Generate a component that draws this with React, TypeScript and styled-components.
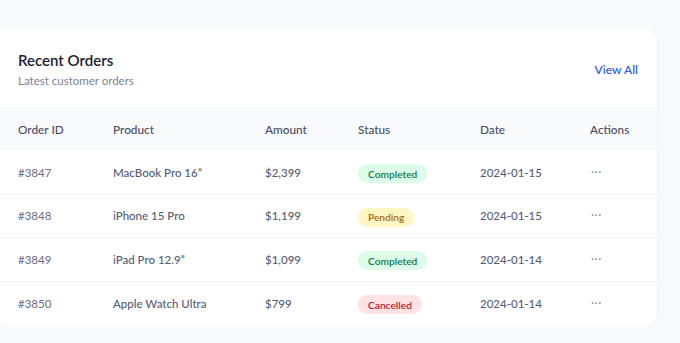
import React from "react";
import styled, { createGlobalStyle } from "styled-components";

const Global = createGlobalStyle`
  html, body { margin: 0; padding: 0; background: #f8f9fb; }
  body { font-family: Lato, "Noto Sans", sans-serif; -webkit-font-smoothing: antialiased; overflow: hidden; }
`;

const Page = styled.div`
  padding-top: 29px;
  padding-right: 23px;
`;

const Card = styled.section`
  margin-left: -6px;
  background: #ffffff;
  border-radius: 12px;
  box-shadow: 0 1px 3px rgba(20, 24, 40, 0.05);
  overflow: hidden;
`;

const Header = styled.div`
  display: flex;
  align-items: center;
  justify-content: space-between;
  height: 78px;
  padding: 0 19px 0 24px;
  box-sizing: border-box;
`;

const TitleBlock = styled.div`
  display: flex;
  flex-direction: column;
  gap: 3px;
  margin-top: 2px;
`;

const Title = styled.h2`
  margin: 0;
  font-size: 15px;
  font-weight: 600;
  color: #1c2033;
  line-height: 20px;
`;

const Subtitle = styled.p`
  margin: 0;
  font-size: 11.5px;
  color: #7d8299;
  line-height: 16px;
`;

const ViewAll = styled.a`
  font-size: 12px;
  font-weight: 600;
  color: #2f63e0;
  text-decoration: none;
  margin-top: 2px;
`;

const Row = styled.div<{ $head?: boolean; $last?: boolean }>`
  display: grid;
  grid-template-columns: 95px 152px 93px 122px 110px 1fr;
  align-items: center;
  padding: 0 24px;
  height: ${(p) => (p.$head ? "44px" : "43.5px")};
  background: ${(p) => (p.$head ? "#f9fafc" : "#ffffff")};
  border-bottom: ${(p) => (p.$head || p.$last ? "none" : "1px solid #f1f2f6")};
  box-sizing: border-box;
`;

const HeadCell = styled.div`
  font-size: 11.8px;
  font-weight: 500;
  color: #474d66;
`;

const Cell = styled.div<{ $tone?: "id" | "main" }>`
  font-size: 11.5px;
  font-weight: ${(p) => (p.$tone === "main" ? 500 : 400)};
  color: ${(p) => (p.$tone === "id" ? "#686d84" : "#565c75")};
`;

const tones = {
  Completed: { bg: "#dcfce7", fg: "#18794a" },
  Pending: { bg: "#fef7c3", fg: "#a66a10" },
  Cancelled: { bg: "#fee2e4", fg: "#b5202f" },
} as const;

type Status = keyof typeof tones;

const Badge = styled.span<{ $status: Status }>`
  display: inline-flex;
  align-items: center;
  height: 19px;
  padding: 0 10px;
  border-radius: 10px;
  font-size: 10.2px;
  font-weight: 600;
  background: ${(p) => tones[p.$status].bg};
  color: ${(p) => tones[p.$status].fg};
`;

const Dots = styled.span`
  font-size: 12px;
  color: #8a8fa3;
  letter-spacing: 0.5px;
  padding-left: 1px;
  position: relative;
  top: -1px;
`;

const orders: { id: string; product: string; amount: string; status: Status; date: string }[] = [
  { id: "#3847", product: "MacBook Pro 16\u201D", amount: "$2,399", status: "Completed", date: "2024-01-15" },
  { id: "#3848", product: "iPhone 15 Pro", amount: "$1,199", status: "Pending", date: "2024-01-15" },
  { id: "#3849", product: "iPad Pro 12.9\u201D", amount: "$1,099", status: "Completed", date: "2024-01-14" },
  { id: "#3850", product: "Apple Watch Ultra", amount: "$799", status: "Cancelled", date: "2024-01-14" },
];

export default function App() {
  return (
    <>
      <Global />
      <Page>
        <Card>
          <Header>
            <TitleBlock>
              <Title>Recent Orders</Title>
              <Subtitle>Latest customer orders</Subtitle>
            </TitleBlock>
            <ViewAll href="#">View All</ViewAll>
          </Header>
          <Row $head>
            <HeadCell>Order ID</HeadCell>
            <HeadCell>Product</HeadCell>
            <HeadCell>Amount</HeadCell>
            <HeadCell>Status</HeadCell>
            <HeadCell>Date</HeadCell>
            <HeadCell>Actions</HeadCell>
          </Row>
          {orders.map((o, i) => (
            <Row key={o.id} $last={i === orders.length - 1}>
              <Cell $tone="id">{o.id}</Cell>
              <Cell $tone="main">{o.product}</Cell>
              <Cell $tone="main">{o.amount}</Cell>
              <div>
                <Badge $status={o.status}>{o.status}</Badge>
              </div>
              <Cell $tone="main">{o.date}</Cell>
              <Dots>···</Dots>
            </Row>
          ))}
        </Card>
      </Page>
    </>
  );
}
